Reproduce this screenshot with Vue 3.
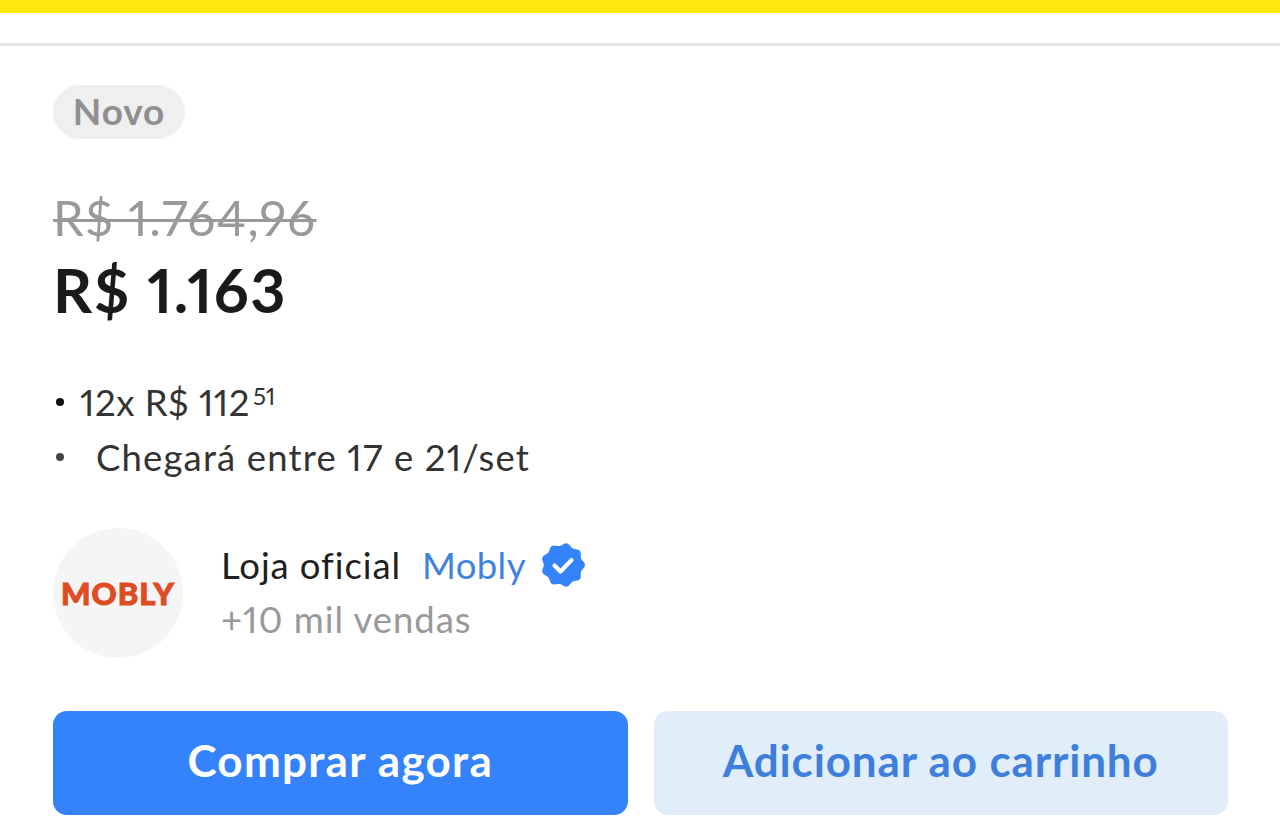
<template>
  <div class="page">
    <div class="topbar"></div>
    <div class="strip"></div>
    <main class="content">
      <span class="badge">Novo</span>
      <div class="old-price">R$ 1.764,96</div>
      <div class="price">R$ 1.163</div>
      <ul class="info">
        <li><i class="dot"></i><span class="txt first">12x R$ 112<sup>51</sup></span></li>
        <li><i class="dot soft"></i><span class="txt second">Chegará entre 17 e 21/set</span></li>
      </ul>
      <div class="seller">
        <div class="logo"><span>MOBLY</span></div>
        <div class="seller-text">
          <div class="seller-name">
            <span class="official">Loja oficial</span>
            <span class="link">Mobly</span>
            <svg class="seal" viewBox="0 0 44 44" width="44" height="44">
              <path :d="sealPath" fill="#3483fa" />
              <path d="M13.5 22.5l6 6 11-11.4" fill="none" stroke="#fff" stroke-width="4.2" stroke-linecap="round" stroke-linejoin="round" />
            </svg>
          </div>
          <div class="sales">+10 mil vendas</div>
        </div>
      </div>
      <div class="actions">
        <button class="btn primary">Comprar agora</button>
        <button class="btn secondary">Adicionar ao carrinho</button>
      </div>
    </main>
  </div>
</template>

<script setup>
// scalloped outline of the verified seal
const points = []
for (let i = 0; i < 72; i++) {
  const a = (i / 72) * Math.PI * 2
  const r = 20.6 + 1.4 * Math.cos(a * 9)
  points.push((22 + r * Math.cos(a)).toFixed(2) + ' ' + (22 + r * Math.sin(a)).toFixed(2))
}
const sealPath = 'M' + points.join('L') + 'Z'
</script>

<style>
html, body { background: #fff; }
</style>

<style scoped>
.page { width: 1280px; height: 827px; overflow: hidden; background: #fff; font-family: Lato, "Open Sans", sans-serif; font-variant-numeric: proportional-nums; }
.topbar { height: 13px; background: #ffe60f; }
.strip { height: 30px; background: #fff; border-bottom: 3px solid #e6e6e6; }
.content { padding: 39px 52px 0 53px; display: flex; flex-direction: column; align-items: flex-start; }
.badge { width: 132px; height: 51px; padding-bottom: 3px; display: flex; align-items: center; justify-content: center; background: #efefef; border-radius: 27px; color: #8f8f8f; font-size: 37px; font-weight: 700; letter-spacing: .9px; }
.old-price { margin-top: 52px; height: 54px; line-height: 52px; font-size: 49px; color: #999; text-decoration: line-through; text-decoration-thickness: 3px; letter-spacing: 1.5px; }
.price { margin-top: 10px; height: 70px; line-height: 70px; font-size: 61px; font-weight: 700; color: #1a1a1a; letter-spacing: 1.5px; }
.info { list-style: none; margin: 50px 0 0; padding: 0; }
.info li { display: flex; align-items: center; box-sizing: border-box; height: 54px; font-size: 36.5px; color: #333; }
.info li + li { padding-top: 2px; }
.dot { width: 8px; height: 8px; border-radius: 50%; background: #111; flex: none; margin-left: 3px; }
.dot.soft { background: #444; }
.txt.first { margin-left: 16px; letter-spacing: .5px; }
.txt.second { margin-left: 32px; letter-spacing: 1.15px; }
sup { font-size: 24px; line-height: 0; vertical-align: 11px; margin-left: 3px; letter-spacing: 0; }
.seller { margin-top: 45px; display: flex; align-items: center; gap: 38px; }
.logo { width: 130px; height: 130px; border-radius: 50%; background: #f5f5f5; display: flex; align-items: center; justify-content: center; }
.logo span { font-size: 31px; font-weight: 900; color: #de4c22; letter-spacing: 1px; -webkit-text-stroke: 1px #de4c22; }
.seller-text { display: flex; flex-direction: column; margin-top: -2px; }
.seller-name { display: flex; align-items: center; height: 54px; font-size: 36.5px; color: #1f1f1f; }
.official { letter-spacing: .9px; }
.link { color: #3f83e0; margin-left: 21px; letter-spacing: .4px; }
.seal { margin-left: 15px; }
.sales { height: 54px; line-height: 54px; font-size: 36.5px; color: #999; letter-spacing: .95px; }
.actions { margin-top: 53px; display: flex; gap: 26px; width: 100%; }
.btn { flex: 1; height: 104px; padding: 0 0 6px; border: 0; border-radius: 14px; font-family: inherit; font-size: 44px; font-weight: 700; }
.primary { background: #3483fa; color: #fff; letter-spacing: 1.25px; }
.secondary { background: #e2edfa; color: #3f7fdc; letter-spacing: .85px; }
</style>
